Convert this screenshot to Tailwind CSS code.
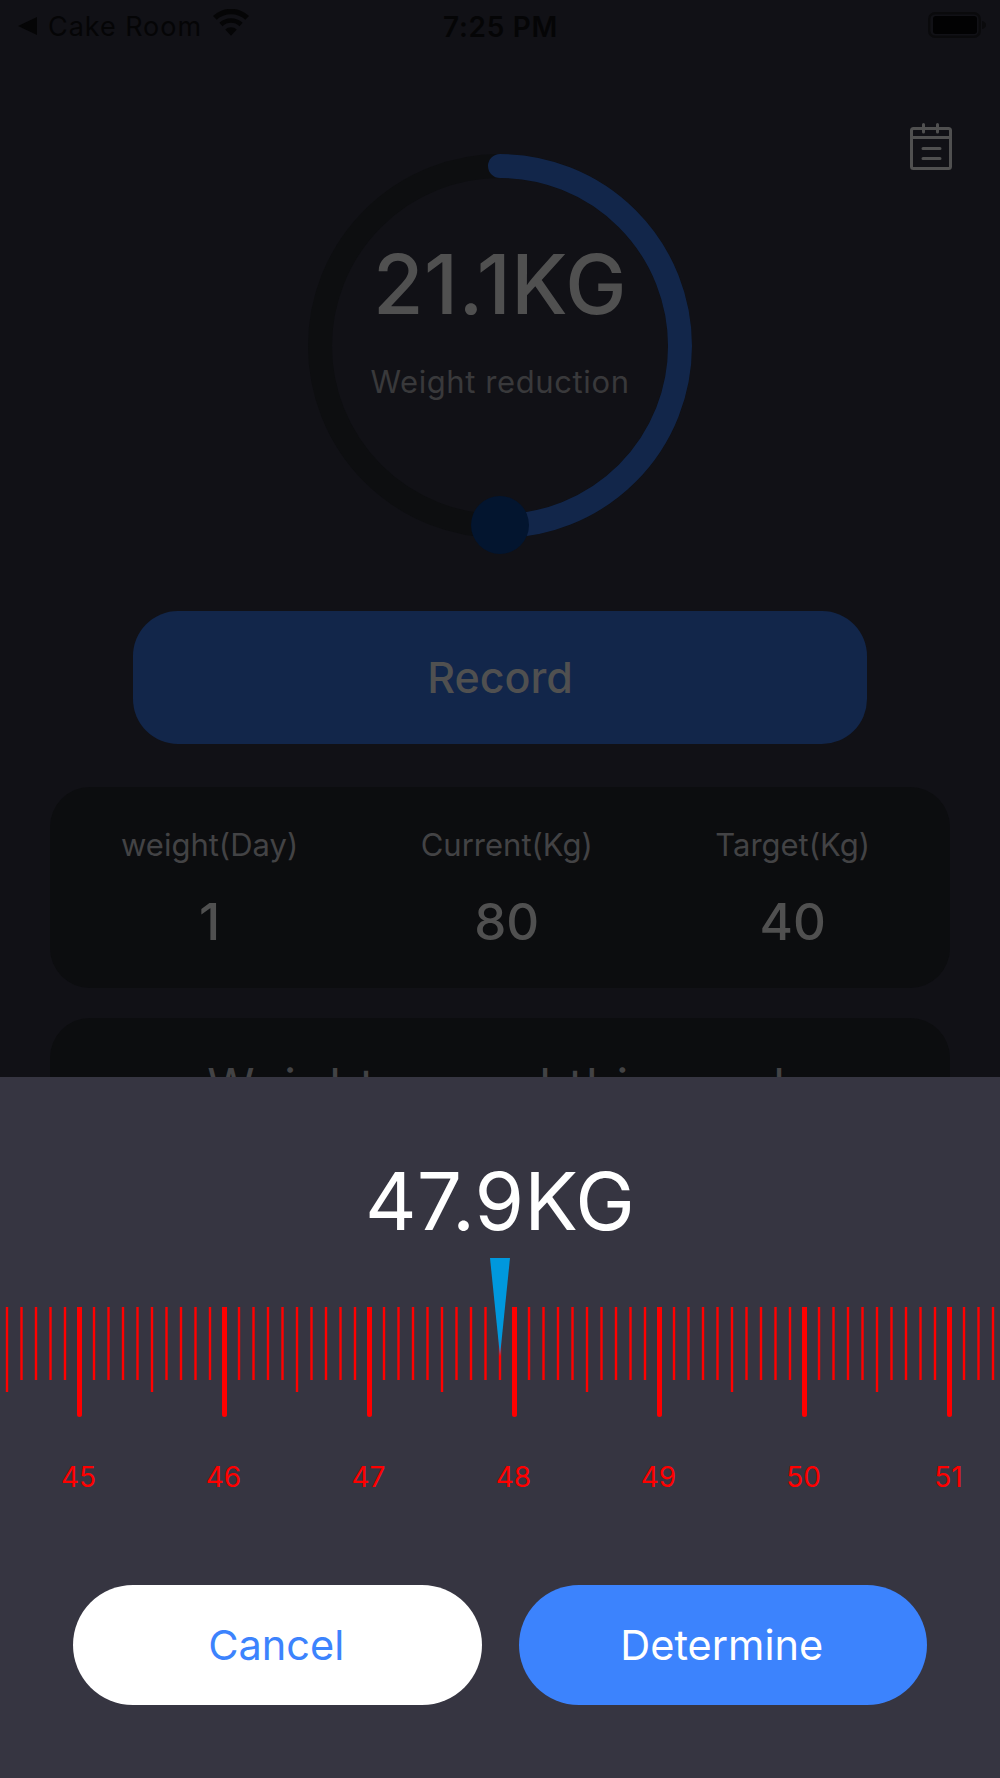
<!DOCTYPE html>
<html>

<head>
  <meta charset="UTF-8" />
  <meta name="viewport" content="width=device-width, initial-scale=1.0" />
  <script src="https://cdn.jsdelivr.net/npm/@tailwindcss/browser@4"></script>
</head>

<body class="bg-[#111116] font-['Inter',sans-serif]">
  <div class="relative w-[1000px] h-[1778px] overflow-hidden bg-[#111116]">

    <!-- Status bar -->
    <div class="relative h-[46px] flex items-center pl-[18px] pr-[13px] text-[#050506] text-[27px] leading-none">
      <svg class="w-[19px] h-[18px] mr-[11px] mt-[5px]" viewBox="0 0 19 18">
        <path d="M19 0V18L0 9Z" fill="#050506" />
      </svg>
      <span class="mt-[6px] tracking-[0.95px]">Cake Room</span>
      <svg class="w-[36px] h-[27px] ml-[11px] -mt-[1px]" viewBox="0 0 35 26">
        <path d="M17.500 26l-5.600-6.200a8 8 0 0 1 11.200 0Z" fill="#050506" />
        <path d="M9.200 16.600l-3-3.400a16.600 16.600 0 0 1 22.600 0l-3 3.400a12.200 12.200 0 0 0-16.600 0Z" fill="#050506" />
        <path d="M3.600 10.400L0 6.600a25.600 25.600 0 0 1 35 0l-3.600 3.800a20.600 20.600 0 0 0-27.800 0Z" fill="#050506" />
      </svg>
      <span class="absolute left-[443px] top-[13px] font-semibold text-[28px] tracking-[0.7px]">7:25 PM</span>
      <svg class="ml-auto w-[59px] h-[26px] mt-[3px]" viewBox="0 0 59 26">
        <rect x="1.200" y="1.200" width="50.600" height="23.600" rx="6" fill="none" stroke="#0a0a0c" stroke-width="2.400" />
        <rect x="5" y="4" width="44" height="18" rx="3" fill="#020203" />
        <path d="M54 9c2.500 .6 4 2 4 4s-1.500 3.400-4 4Z" fill="#0a0a0c" />
      </svg>
    </div>

    <!-- Calendar button -->
    <div class="flex justify-end pr-[48px] mt-[77px]">
      <svg class="w-[42px] h-[47px]" viewBox="0 0 42 47" fill="none" stroke="#505050" stroke-width="3"
        stroke-linecap="round" stroke-linejoin="round">
        <rect x="1.500" y="5.500" width="39" height="40" rx="2" />
        <path d="M1.500 14.500H40.500M13.500 1.500V9M27.500 1.500V9M13 25.500H30M13 35.500H30" />
      </svg>
    </div>

    <!-- Progress ring -->
    <div class="relative w-[420px] h-[420px] mx-auto -mt-[34.5px]">
      <svg class="w-[420px] h-[420px]" viewBox="0 0 420 420" fill="none" stroke-width="24">
        <circle cx="210" cy="210" r="180" stroke="#0d0e10" />
        <path d="M210 30A180 180 0 0 1 210 390" stroke="#12264a" stroke-linecap="round" />
        <circle cx="210" cy="389" r="29" fill="#03152f" stroke="none" />
      </svg>
      <div class="absolute inset-x-0 top-[99px] text-center font-medium text-[#505050] text-[82px] leading-[100px] tracking-[0.5px]">21.1KG</div>
      <div class="absolute inset-x-0 top-[224px] text-center text-[#39393b] text-[31px] leading-[44px] tracking-[0.6px]">Weight reduction</div>
    </div>

    <!-- Record -->
    <div class="w-[734px] h-[133px] mx-auto mt-[55.5px] rounded-[45px] bg-[#12264a] flex items-center justify-center font-medium text-[#505050] text-[43px]">
      Record
    </div>

    <!-- Stats card -->
    <div class="mx-[50px] mt-[43px] h-[201px] rounded-[40px] bg-[#0c0d0f] flex justify-between pl-[71px] pr-[80px] pt-[38px]">
      <div class="flex flex-col items-center">
        <span class="text-[31px] leading-[40px] text-[#434345]">weight(Day)</span>
        <span class="mt-[26px] font-medium text-[51px] leading-[62px] text-[#505050]">1</span>
      </div>
      <div class="flex flex-col items-center">
        <span class="text-[31px] leading-[40px] text-[#434345]">Current(Kg)</span>
        <span class="mt-[26px] font-medium text-[51px] leading-[62px] text-[#505050]">80</span>
      </div>
      <div class="flex flex-col items-center">
        <span class="text-[31px] leading-[40px] text-[#434345]">Target(Kg)</span>
        <span class="mt-[26px] font-medium text-[51px] leading-[62px] text-[#505050]">40</span>
      </div>
    </div>

    <!-- Second card, mostly under the sheet -->
    <div class="mx-[50px] mt-[30px] h-[300px] rounded-[40px] bg-[#0c0d0f] pt-[40px] pl-[9px] text-center text-[#434345] text-[48px] leading-[56px] tracking-[2px] whitespace-nowrap">
      Weight record this week
    </div>

    <!-- Bottom sheet -->
    <div class="absolute inset-x-0 top-[1077px] bottom-0 bg-[#363541] pt-[74px]">
      <div class="text-center text-white text-[80px] leading-[100px]">47.9KG</div>

      <div class="relative mt-[56px] h-[110px]">
        <svg id="ruler" class="w-[1000px] h-[110px]" viewBox="0 0 1000 110"></svg>
        <svg class="absolute left-[490px] -top-[49px] w-[20px] h-[98px]" viewBox="0 0 20 98">
          <path d="M0 0H20L10 98Z" fill="#0098dd" />
        </svg>
      </div>

      <div class="flex pl-[6px] mt-[40px] text-[#ff0000] text-[28px] leading-[40px]">
        <span class="w-[145px] shrink-0 text-center">45</span>
        <span class="w-[145px] shrink-0 text-center">46</span>
        <span class="w-[145px] shrink-0 text-center">47</span>
        <span class="w-[145px] shrink-0 text-center">48</span>
        <span class="w-[145px] shrink-0 text-center">49</span>
        <span class="w-[145px] shrink-0 text-center">50</span>
        <span class="w-[145px] shrink-0 text-center">51</span>
      </div>

      <div class="flex justify-center gap-[37px] mt-[88px] text-[41.5px]">
        <button class="w-[408.5px] h-[120px] rounded-full bg-white text-[#3c83fd] pr-[2px]">Cancel</button>
        <button class="w-[408.5px] h-[120px] rounded-full bg-[#3c83fd] text-white pr-[2px]">Determine</button>
      </div>
    </div>
  </div>

  <script>
    // ruler ticks, one every 0.1kg
    let ruler = document.getElementById('ruler'), ticks = '';
    for (let i = 0; i < 69; i++) {
      let x = 7 + 14.5 * i, major = i % 10 == 5, mid = i % 10 == 0;
      let end = major ? 107.5 : mid ? 85 : 73;
      ticks += `<line x1="${x}" x2="${x}" y1="0" y2="${end}" stroke="#ff0000" stroke-width="${major ? 5 : 2.4}" />`;
      if (major) ticks += `<circle cx="${x}" cy="107.5" r="2.5" fill="#ff0000" />`;
    }
    ruler.innerHTML = ticks;
  </script>
</body>

</html>
